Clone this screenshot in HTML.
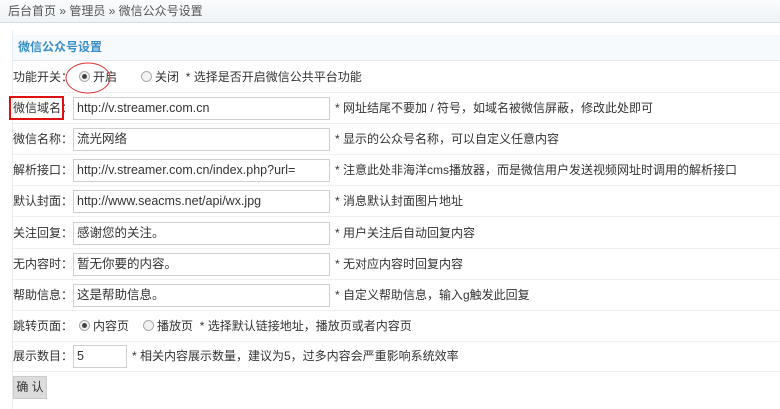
<!DOCTYPE html>
<html><head><meta charset="utf-8"><style>
*{margin:0;padding:0;box-sizing:border-box}
body{width:780px;height:409px;background:#fff;font:12px "Liberation Sans","Noto Sans CJK SC",sans-serif;color:#333;position:relative;overflow:hidden}
.crumb{position:absolute;left:0;top:0;width:780px;height:23px;background:linear-gradient(#fafcfd,#eef3f7);border-bottom:1px solid #d5dde4;padding:3px 0 0 8px;color:#555;line-height:17px}
.panel{position:absolute;left:12px;top:30px;right:0;bottom:0;border-left:1px solid #e6ecf0}
.hd{position:absolute;left:13px;top:35px;right:0;height:26px;background:#f7fafc;border-bottom:1px solid #e3e9ee;color:#3a8fc8;font-weight:bold;padding:0 0 0 5px;line-height:25px}
.row{position:absolute;left:13px;right:0;height:31px;border-bottom:1px solid #f0f0f0}
.lab{position:absolute;left:0;top:0;line-height:30px}
.inp{position:absolute;left:60px;top:4px;width:257px;height:23px;border:1px solid #d0d0d0;padding:0 0 0 3px;font-size:12.5px;line-height:21px;color:#333;overflow:hidden}
.tip{position:absolute;left:322px;top:0;line-height:30px}
.rad{display:inline-block;width:11px;height:11px;border:1px solid #aaa;border-radius:50%;background:#f2f2f2;vertical-align:-1px;margin-right:3px;position:relative}
.rad.on::after{content:"";position:absolute;left:2px;top:2px;width:5px;height:5px;border-radius:50%;background:#444}
</style></head><body>
<div class="crumb">后台首页 » 管理员 » 微信公众号设置</div>
<div class="panel"></div>
<div class="hd">微信公众号设置</div>

<div class="row" style="top:62px"><span class="lab">功能开关：<span style="margin-left:6px"><span class="rad on"></span>开启</span><span style="margin-left:24px"><span class="rad"></span>关闭</span>&nbsp; * 选择是否开启微信公共平台功能</span></div>
<svg style="position:absolute;left:64px;top:61px" width="48" height="34"><ellipse cx="24" cy="17" rx="22" ry="15" fill="none" stroke="#d33" stroke-width="1"/></svg>

<div class="row" style="top:93px"><span class="lab">微信域名：</span><div class="inp">http://v.streamer.com.cn</div><span class="tip">* 网址结尾不要加 / 符号，如域名被微信屏蔽，修改此处即可</span></div>
<div style="position:absolute;left:9px;top:96px;width:55px;height:24px;border:2px solid #d11"></div>
<div class="row" style="top:124px"><span class="lab">微信名称：</span><div class="inp">流光网络</div><span class="tip">* 显示的公众号名称，可以自定义任意内容</span></div>
<div class="row" style="top:155px"><span class="lab">解析接口：</span><div class="inp">http://v.streamer.com.cn/index.php?url=</div><span class="tip">* 注意此处非海洋cms播放器，而是微信用户发送视频网址时调用的解析接口</span></div>
<div class="row" style="top:186px"><span class="lab">默认封面：</span><div class="inp">http://www.seacms.net/api/wx.jpg</div><span class="tip">* 消息默认封面图片地址</span></div>
<div class="row" style="top:218px"><span class="lab">关注回复：</span><div class="inp">感谢您的关注。</div><span class="tip">* 用户关注后自动回复内容</span></div>
<div class="row" style="top:249px"><span class="lab">无内容时：</span><div class="inp">暂无你要的内容。</div><span class="tip">* 无对应内容时回复内容</span></div>
<div class="row" style="top:280px"><span class="lab">帮助信息：</span><div class="inp">这是帮助信息。</div><span class="tip">* 自定义帮助信息，输入g触发此回复</span></div>
<div class="row" style="top:311px"><span class="lab">跳转页面：<span style="margin-left:6px"><span class="rad on"></span>内容页</span><span style="margin-left:14px"><span class="rad"></span>播放页</span>&nbsp; * 选择默认链接地址，播放页或者内容页</span></div>
<div class="row" style="top:341px"><span class="lab">展示数目：</span><div class="inp" style="width:54px">5</div><span class="tip" style="left:119px">* 相关内容展示数量，建议为5，过多内容会严重影响系统效率</span></div>
<div style="position:absolute;left:13px;top:376px;width:34px;height:23px;background:#dcdcdc;border:1px solid #ccc;line-height:21px;text-align:center">确 认</div>
</body></html>
